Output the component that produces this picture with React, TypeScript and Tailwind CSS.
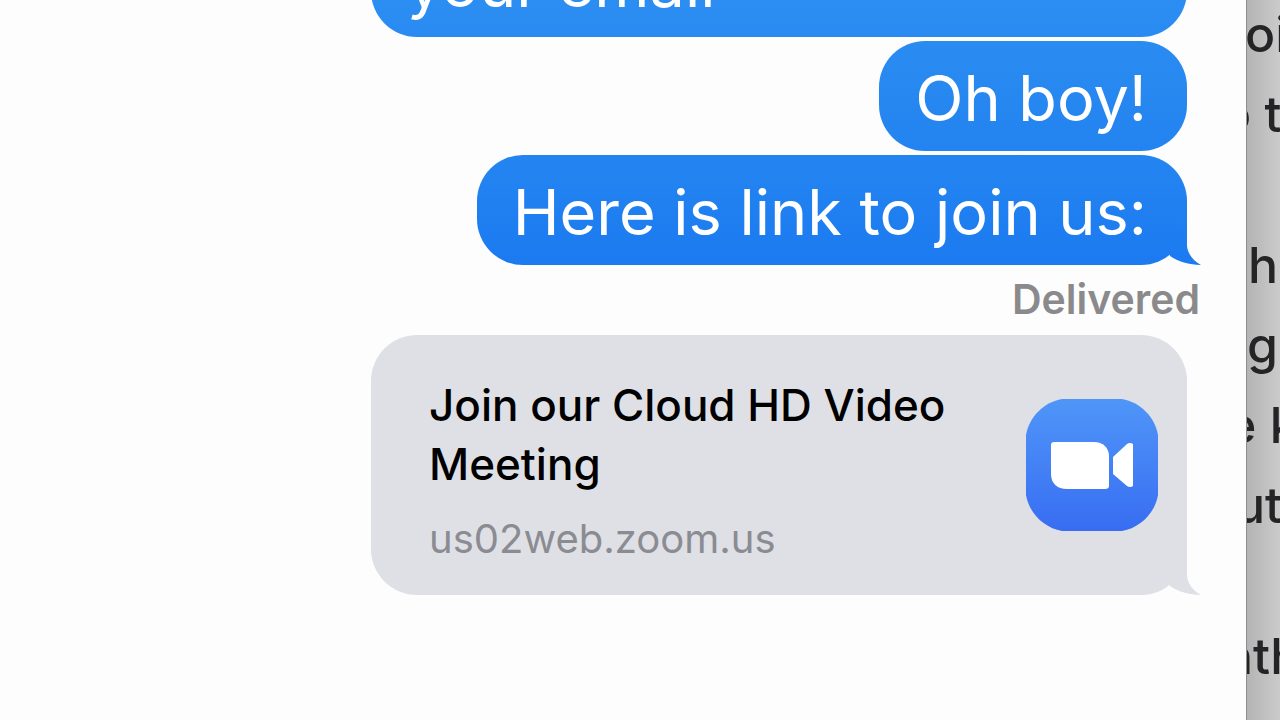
import React from 'react';

interface TailProps {
  id: string;
  from: string;
  to: string;
}

const Tail: React.FC<TailProps> = ({ id, from, to }) => (
  <svg viewBox="0 0 36 50" aria-hidden="true" className="absolute bottom-0 -right-4 w-9 h-[50px]">
    <defs>
      <linearGradient id={id} gradientUnits="userSpaceOnUse" x1="0" y1="0" x2="0" y2="50">
        <stop offset="0" stopColor={from} />
        <stop offset="1" stopColor={to} />
      </linearGradient>
    </defs>
    <path d="M12 0H20V31C20.5 38 26 46 34 50C22 49.5 11 47 3 41V30Z" fill={`url(#${id})`} />
  </svg>
);

const messages = [
  { id: 1, text: 'your email', className: 'w-full max-w-[816px] from-[#3293f0] to-[#298bf2]', tail: false },
  { id: 2, text: 'Oh boy!', className: 'from-[#2a8cf1] to-[#2383f0]', tail: false },
  { id: 3, text: 'Here is link to join us:', className: 'from-[#2485f1] to-[#1b7af0]', tail: true },
];

// Lines of the document that sits behind the chat window
const paragraphs = [
  [
    { text: 'oi', className: '-ml-0.5' },
    { text: 'o t', className: '-ml-[26px]' },
  ],
  [
    { text: 'th', className: '-ml-4' },
    { text: 'g', className: 'ml-0' },
    { text: 'e k', className: '-ml-5' },
    { text: 'ut', className: '-ml-3' },
  ],
  [{ text: 'nth', className: '-ml-6' }],
];

const ZoomLogo: React.FC = () => (
  <svg viewBox="0 0 132 132" className="w-[132px] h-[132px] shrink-0" role="img" aria-label="Zoom">
    <defs>
      <linearGradient id="zoom-bg" x1="0" y1="0" x2="0" y2="1">
        <stop offset="0" stopColor="#4f96f8" />
        <stop offset="1" stopColor="#386df2" />
      </linearGradient>
    </defs>
    <path
      d="M36 0H96C114 3 129 18 132 36V96C129 114 114 129 96 132H36C18 129 3 114 0 96V36C3 18 18 3 36 0Z"
      fill="url(#zoom-bg)"
    />
    <path d="M28 43H68C77 43 83 49 83 57V87Q83 90 79 90H41C31 90 25 84 25 75V46Q25 43 28 43Z" fill="#fff" />
    <path d="M87 58L101 45Q104 43 107 45V87Q104 89 101 87L87 75Z" fill="#fff" />
  </svg>
);

export default function App() {
  return (
    <div className="flex h-screen overflow-hidden bg-[#fdfdfd] font-[Inter,sans-serif]">
      <main className="flex-1 min-w-0 flex flex-col items-end justify-end gap-1 pl-8 pr-[59px] pb-[125px]">
        {messages.map((m) => (
          <div
            key={m.id}
            className={`relative shrink-0 rounded-[46px] bg-linear-to-b pl-[36px] pr-10 pt-[17px] pb-[13px] text-[63px] leading-[80px] text-white ${m.className}`}
          >
            {m.text}
            {m.tail && <Tail id="tail-sent" from="#1f80f0" to="#1b7af0" />}
          </div>
        ))}

        <p className="-mr-[13px] pt-[7px] pb-[9px] text-[41px] leading-[46px] font-semibold text-[#8a8a8c]">Delivered</p>

        <a
          href="https://us02web.zoom.us"
          className="relative shrink-0 w-full max-w-[816px] flex items-center justify-between rounded-[46px] bg-[#dfe0e5] pl-[58px] pr-[29px] h-[260px]"
        >
          <div className="max-w-[540px] pt-[13px]">
            <h2 className="text-[44px] leading-[59px] font-medium text-black">Join our Cloud HD Video Meeting</h2>
            <p className="pt-[17px] text-[40px] leading-[56px] text-[#8b8c92]">us02web.zoom.us</p>
          </div>
          <ZoomLogo />
          <Tail id="tail-card" from="#dfe0e5" to="#dfe0e5" />
        </a>
      </main>

      <aside className="w-[34px] shrink-0 overflow-hidden border-l border-[#8e8e8e] bg-linear-to-r from-[#b4b4b4] to-[#cbcbcb] text-[50px] leading-[80px] font-medium text-[#242426]">
        <div className="flex flex-col gap-[71px] -mt-1.5">
          {paragraphs.map((lines, i) => (
            <div key={i}>
              {lines.map((line) => (
                <p key={line.text} className={`whitespace-nowrap ${line.className}`}>
                  {line.text}
                </p>
              ))}
            </div>
          ))}
        </div>
      </aside>
    </div>
  );
}
